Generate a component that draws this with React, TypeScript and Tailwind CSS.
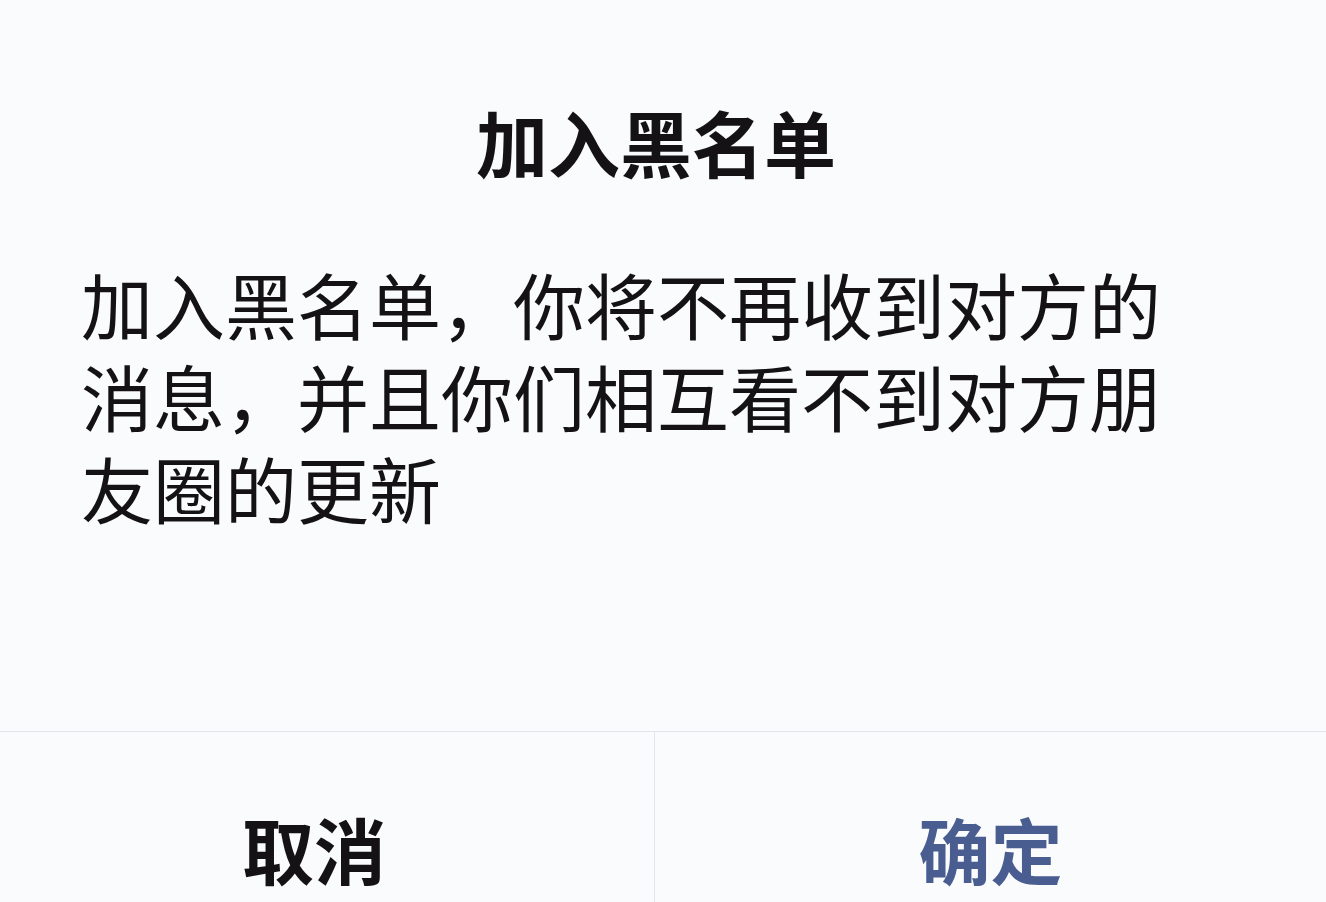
export default function App() {
  const cjk = { fontFamily: '"Noto Sans CJK SC", "Noto Sans", sans-serif' };

  return (
    <div className="w-[1326px] h-[902px] overflow-hidden bg-[#fafbfd] text-[#141214]" style={cjk}>
      <div className="h-[731px] flex flex-col">
        <h1 className="pt-[105px] pr-[14px] text-center text-[72px] leading-none font-bold">加入黑名单</h1>
        <p className="mt-[80px] pl-[81px] max-w-[1190px] text-[72px] leading-[92px] font-normal">
          加入黑名单，你将不再收到对方的消息，并且你们相互看不到对方朋友圈的更新
        </p>
      </div>
      <div className="flex h-[171px] border-t border-[#e3e5ea]">
        <button className="flex-1 pt-[61px] pr-[26px] text-center text-[72px] leading-none font-bold text-[#141214] border-r border-[#e3e5ea]">
          取消
        </button>
        <button className="w-[671px] pt-[61px] text-center text-[72px] leading-none font-bold text-[#4a5d90]">
          确定
        </button>
      </div>
    </div>
  );
}
